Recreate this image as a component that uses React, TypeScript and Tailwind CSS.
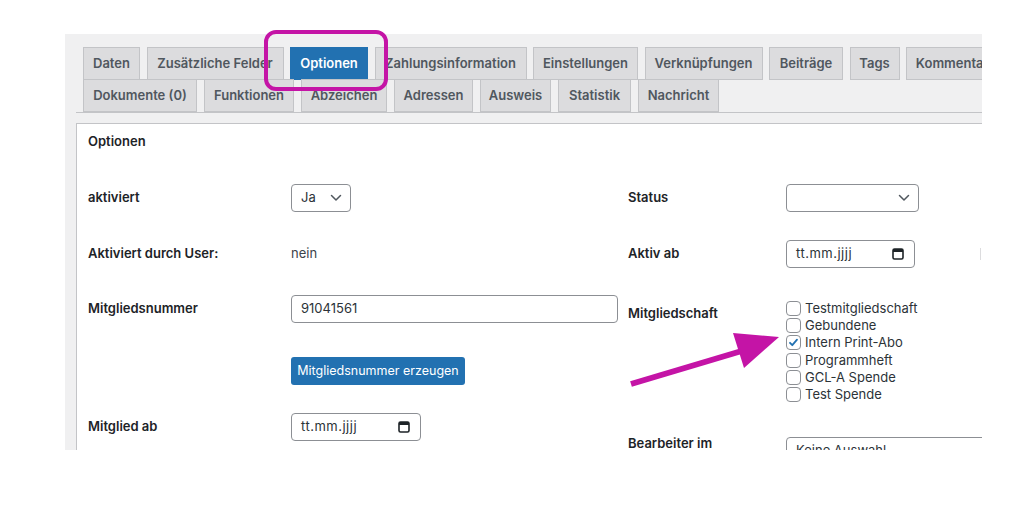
import React from 'react';

const rowOne = [
  { label: 'Daten', w: 'w-[57px]' },
  { label: 'Zusätzliche Felder', w: 'w-[137px]' },
  { label: 'Optionen', w: 'w-[78px]', active: true },
  { label: 'Zahlungsinformation', w: 'w-[152px]' },
  { label: 'Einstellungen', w: 'w-[105px]' },
  { label: 'Verknüpfungen', w: 'w-[118px]' },
  { label: 'Beiträge', w: 'w-[74px]' },
  { label: 'Tags', w: 'w-[50px]' },
  { label: 'Kommentare', w: 'w-[100px]' },
];

const rowTwo = [
  { label: 'Dokumente (0)', w: 'w-[114px]' },
  { label: 'Funktionen', w: 'w-[90px]' },
  { label: 'Abzeichen', w: 'w-[86px]' },
  { label: 'Adressen', w: 'w-[79px]' },
  { label: 'Ausweis', w: 'w-[71px]' },
  { label: 'Statistik', w: 'w-[73px]' },
  { label: 'Nachricht', w: 'w-[81px]' },
];

const memberships = [
  { label: 'Testmitgliedschaft', checked: false },
  { label: 'Gebundene', checked: false },
  { label: 'Intern Print-Abo', checked: true },
  { label: 'Programmheft', checked: false },
  { label: 'GCL-A Spende', checked: false },
  { label: 'Test Spende', checked: false },
];

const Tab: React.FC<{ label: string; w: string; active?: boolean }> = ({ label, w, active }) => (
  <div
    className={`${w} shrink-0 h-[33px] flex items-center justify-center border text-[13px] font-semibold whitespace-nowrap overflow-hidden ${
      active ? 'bg-[#2271b1] border-[#2271b1] text-white' : 'bg-[#dcdcde] border-[#c3c4c7] text-[#50575e]'
    }`}
  >
    {label}
  </div>
);

const Chevron = () => (
  <svg width="12" height="8" viewBox="0 0 12 8" fill="none">
    <path d="M1.5 1.5 6 6l4.5-4.5" stroke="#50575e" strokeWidth="1.5" strokeLinecap="round" strokeLinejoin="round" />
  </svg>
);

const DateInput: React.FC<{ w: string }> = ({ w }) => (
  <div className={`${w} h-[28px] border border-[#8c8f94] rounded-[4px] bg-white flex items-center justify-between pl-[9px] pr-[10px]`}>
    <span className="text-[13px] text-[#2c3338] tracking-[0.5px]">tt.mm.jjjj</span>
    <svg width="12" height="12" viewBox="0 0 12 12">
      <rect x="1" y="1" width="10" height="10" rx="1.5" fill="none" stroke="#1d2327" strokeWidth="1.6" />
      <rect x="1" y="1" width="10" height="3" fill="#1d2327" />
    </svg>
  </div>
);

const Label: React.FC<{ children: React.ReactNode; w: string }> = ({ children, w }) => (
  <div className={`${w} shrink-0 text-[13px] font-semibold text-[#1d2327]`}>{children}</div>
);

export default function App() {
  return (
    <div className="w-[1024px] h-[512px] bg-white relative overflow-hidden" style={{ fontFamily: 'Inter, "Liberation Sans", sans-serif' }}>
      <div className="ml-[65px] pt-[34px]">
        <div className="w-[917px] h-[416px] bg-[#f0f0f1] overflow-hidden pt-[13px]">
          {/* tabs */}
          <div className="ml-[11px] pl-[7px] border-b border-[#c3c4c7] w-[1000px]">
            <div className="flex gap-[6.5px]">
              {rowOne.map((t) => (
                <Tab key={t.label} {...t} />
              ))}
            </div>
            <div className="flex gap-[7px] -mt-px">
              {rowTwo.map((t) => (
                <Tab key={t.label} {...t} />
              ))}
            </div>
          </div>

          {/* panel */}
          <div className="ml-[11px] mt-[10px] w-[1000px] h-[400px] bg-white border border-[#c3c4c7] pt-[7px] pl-[11px]">
            <div className="text-[13px] font-semibold text-[#1d2327] leading-[20px]">Optionen</div>

            <div className="flex mt-[33px]">
              {/* left column */}
              <div className="w-[540px] shrink-0 flex flex-col">
                <div className="h-[28px] flex items-center">
                  <Label w="w-[203px]">aktiviert</Label>
                  <div className="w-[60px] h-[28px] border border-[#8c8f94] rounded-[4px] flex items-center justify-between pl-[9px] pr-[8px]">
                    <span className="text-[13px] text-[#2c3338]">Ja</span>
                    <Chevron />
                  </div>
                </div>
                <div className="h-[28px] mt-[28px] flex items-center">
                  <Label w="w-[203px]">Aktiviert durch User:</Label>
                  <span className="text-[13px] text-[#3c434a]">nein</span>
                </div>
                <div className="h-[28px] mt-[27px] flex items-center">
                  <Label w="w-[203px]">Mitgliedsnummer</Label>
                  <div className="w-[327px] h-[28px] border border-[#8c8f94] rounded-[4px] flex items-center pl-[9px] text-[13px] text-[#2c3338]">
                    91041561
                  </div>
                </div>
                <div className="h-[28px] mt-[34px] flex items-center pl-[203px]">
                  <div className="w-[174px] h-[28px] bg-[#2271b1] rounded-[3px] flex items-center justify-center text-[12.5px] text-white">
                    Mitgliedsnummer erzeugen
                  </div>
                </div>
                <div className="h-[28px] mt-[28px] flex items-center">
                  <Label w="w-[203px]">Mitglied ab</Label>
                  <DateInput w="w-[130px]" />
                </div>
              </div>

              {/* right column */}
              <div className="flex flex-col">
                <div className="h-[28px] flex items-center">
                  <Label w="w-[158px]">Status</Label>
                  <div className="w-[133px] h-[28px] border border-[#8c8f94] rounded-[4px] flex items-center justify-end pr-[8px]">
                    <Chevron />
                  </div>
                </div>
                <div className="h-[28px] mt-[28px] flex items-center">
                  <Label w="w-[158px]">Aktiv ab</Label>
                  <DateInput w="w-[129px]" />
                  <div className="ml-[65px] w-px h-[12px] bg-[#dcdcde]" />
                </div>
                <div className="mt-[32px] flex">
                  <div className="pt-[4px]">
                    <Label w="w-[158px]">Mitgliedschaft</Label>
                  </div>
                  <div className="flex flex-col">
                    {memberships.map((m) => (
                      <div key={m.label} className="h-[17.2px] flex items-center gap-[4px]">
                        <div className="w-[15px] h-[15px] border border-[#8c8f94] rounded-[4px] bg-white flex items-center justify-center">
                          {m.checked && (
                            <svg width="11" height="11" viewBox="0 0 11 11">
                              <path d="M2 5.8 4.3 8.2 9 2.6" fill="none" stroke="#2271b1" strokeWidth="1.8" strokeLinecap="round" strokeLinejoin="round" />
                            </svg>
                          )}
                        </div>
                        <span className="text-[13px] text-[#2c3338] leading-none">{m.label}</span>
                      </div>
                    ))}
                  </div>
                </div>
                <div className="mt-[34px] flex items-start">
                  <div className="w-[158px] shrink-0 -mt-[3px]">
                    <div className="w-[110px] text-[13px] font-semibold text-[#1d2327] leading-[18px]">Bearbeiter im System</div>
                  </div>
                  <div className="w-[250px] h-[28px] border border-[#8c8f94] rounded-[4px] flex items-center pl-[9px] text-[13px] text-[#2c3338]">
                    Keine Auswahl
                  </div>
                </div>
              </div>
            </div>
          </div>
        </div>
      </div>

      {/* annotations */}
      <svg className="absolute inset-0 pointer-events-none" width="1024" height="512" viewBox="0 0 1024 512">
        <rect x="266" y="32" width="120" height="57" rx="10" fill="none" stroke="#c414a6" strokeWidth="4" />
        <line x1="631" y1="384" x2="745" y2="350" stroke="#c414a6" strokeWidth="6" />
        <polygon points="733,333 779,337 744,368" fill="#c414a6" />
      </svg>
    </div>
  );
}
